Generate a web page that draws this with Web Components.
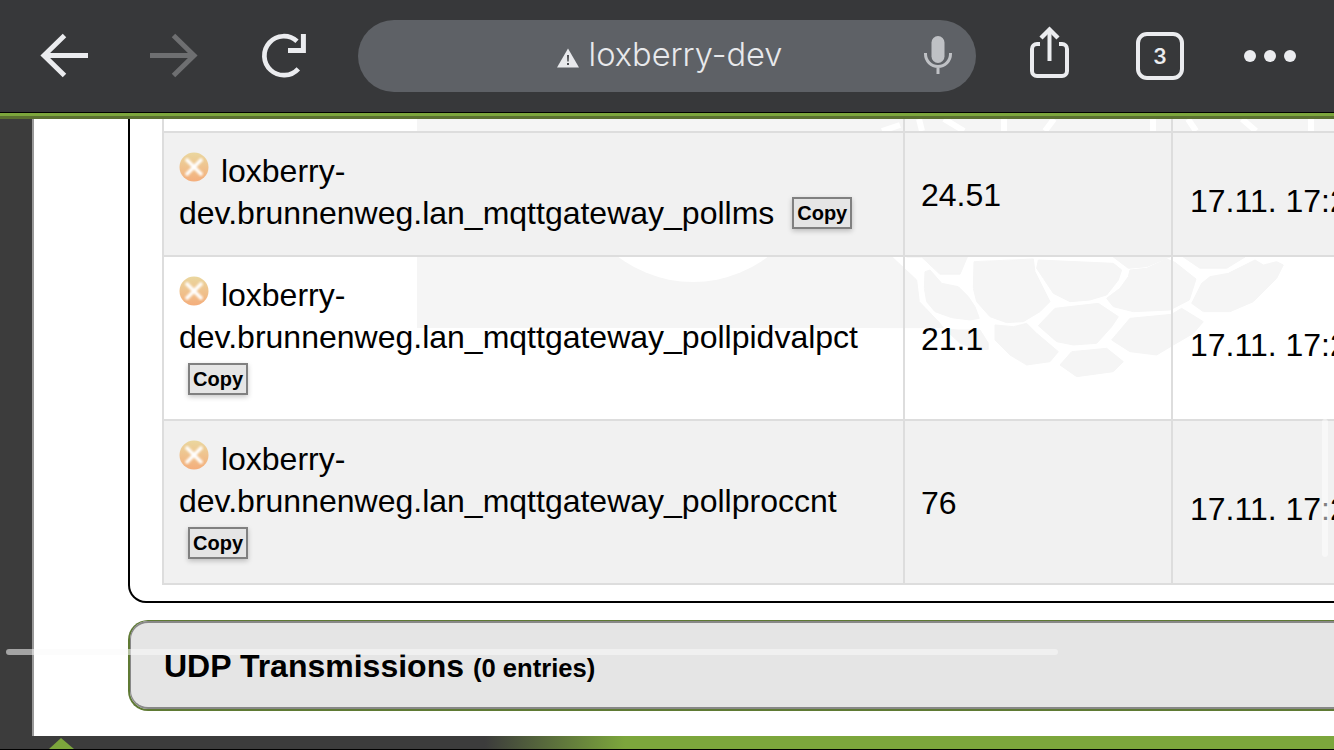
<!DOCTYPE html>
<html>
<head>
<meta charset="utf-8">
<style>
  html, body { margin: 0; height: 100%; overflow: hidden; background: #3c3c3c; }
  body { font-family: "Liberation Sans", Arial, sans-serif; }
</style>
</head>
<body>

<app-shell>
  <browser-bar slot="top" url="loxberry-dev" tabs="3"></browser-bar>

  <plugin-panel>
    <data-row kind="strip"></data-row>
    <data-row kind="odd" value="24.51" time="17.11. 17:2">
      <status-icon></status-icon> loxberry-dev.brunnenweg.lan_mqttgateway_pollms <copy-button>Copy</copy-button>
    </data-row>
    <data-row kind="even" value="21.1" time="17.11. 17:2">
      <status-icon></status-icon> loxberry-dev.brunnenweg.lan_mqttgateway_pollpidvalpct <copy-button>Copy</copy-button>
    </data-row>
    <data-row kind="odd last" value="76" time="17.11. 17:2">
      <status-icon></status-icon> loxberry-dev.brunnenweg.lan_mqttgateway_pollproccnt <copy-button>Copy</copy-button>
    </data-row>
  </plugin-panel>

  <collapsed-panel>UDP Transmissions <small slot="note">(0 entries)</small></collapsed-panel>

  <page-footer slot="bottom"></page-footer>
</app-shell>

<script>
  // toolbar of the mobile browser
  class BrowserBar extends HTMLElement {
    connectedCallback() {
      let url = this.getAttribute('url');
      let tabs = this.getAttribute('tabs');
      this.attachShadow({mode: 'open'});
      this.shadowRoot.innerHTML = `
        <style>
          :host { display: block; background: #37383a; }
          .bar { height: 112px; display: flex; align-items: center; padding-left: 40px; box-sizing: border-box; }
          svg { flex: none; display: block; }
          .forward, .reload { margin-left: 62px; }
          .share { margin-left: 50px; margin-top: -4px; }
          .tabs { margin-left: 62px; }
          .more { margin-left: 60px; }
          .url {
            flex: none; box-sizing: border-box; width: 618px; height: 72px; margin-left: 50px;
            border-radius: 36px; background: #5e6166; color: #e8e9ec;
            display: flex; align-items: center; justify-content: center; position: relative;
            font: 300 32.600px Inter, sans-serif; padding: 0 0 4px 5px;
          }
          .url .warn { margin-right: 10px; margin-top: 7px; }
          .url .mic { position: absolute; right: 23px; top: 15px; }
          .tabs {
            flex: none; box-sizing: border-box; width: 48px; height: 48px;
            border: 4px solid #ebecef; border-radius: 11px; color: #ebecef;
            display: flex; align-items: center; justify-content: center;
            font: 600 21px Inter, sans-serif;
          }
          .line { height: 1px; background: #000; }
          .green { height: 3px; background: #7ca63c; }
          .dark { height: 3px; background: #5a7030; }
        </style>
        <div class="bar">
          <svg width="48" height="48" viewBox="0 0 48 48" fill="none" stroke="#ebecef" stroke-width="5">
            <path d="M48 23.500H4M24.500 3.500 4 23.500l20.500 20"/>
          </svg>
          <svg class="forward" width="48" height="48" viewBox="0 0 48 48" fill="none" stroke="#6e6f71" stroke-width="5">
            <path d="M0 23.500h44M23.500 3.500 44 23.500l-20.500 20"/>
          </svg>
          <svg class="reload" width="48" height="48" viewBox="0 0 48 48" fill="none" stroke="#ebecef" stroke-width="4.700">
            <path d="M37 9.300A19.500 19.500 0 1 0 38.300 36.800"/>
            <path d="M28 18.500H43.400V2" stroke-width="5"/>
          </svg>
          <div class="url">
            <svg class="warn" width="22" height="20" viewBox="0 0 22 20">
              <path d="M11 0.500 22 19.500H0z" fill="#e8e9ec"/>
              <path d="M10 7h2l-.3 6.500h-1.400zM10 15h2v2h-2z" fill="#4a4c50"/>
            </svg>
            ${url}
            <svg class="mic" width="30" height="40" viewBox="0 0 30 40" fill="none">
              <rect x="8.500" y="1" width="13" height="27" rx="6.500" fill="#bfc1c5"/>
              <path d="M2.500 18v1a12.500 12.500 0 0 0 25 0v-1M15 32v7" stroke="#bfc1c5" stroke-width="3"/>
            </svg>
          </div>
          <svg class="share" width="48" height="56" viewBox="0 0 48 56" fill="none" stroke="#ebecef" stroke-width="4">
            <path d="M14 18H11a5 5 0 0 0-5 5v22a5 5 0 0 0 5 5h25a5 5 0 0 0 5-5V23a5 5 0 0 0-5-5h-3"/>
            <path d="M23.500 35V3"/>
            <path d="M15 12 23.500 3.500 32 12" stroke-width="4.400"/>
          </svg>
          <div class="tabs">${tabs}</div>
          <svg class="more" width="52" height="12" viewBox="0 0 52 12" fill="#ebecef">
            <circle cx="6" cy="6" r="6"/><circle cx="26" cy="6" r="6"/><circle cx="46" cy="6" r="6"/>
          </svg>
        </div>
        <div class="line"></div><div class="green"></div><div class="dark"></div>`;
    }
  }
  customElements.define('browser-bar', BrowserBar);

  // whole screen: toolbar, left gutter, scrolled page, footer, overlay scrollbars
  class AppShell extends HTMLElement {
    connectedCallback() {
      this.attachShadow({mode: 'open'});
      this.shadowRoot.innerHTML = `
        <style>
          :host { display: flex; flex-direction: column; height: 750px; width: 1334px; overflow: hidden; position: relative; }
          .middle { flex: 1; min-height: 0; display: flex; }
          .gutter { flex: none; width: 32px; background: #3c3c3c; }
          .page {
            flex: 1; min-width: 0; background: #fff; border-left: 2px solid #999;
            position: relative; overflow: hidden;
          }
          .flow { position: relative; padding-left: 94px; width: 1500px; }
          .mark { position: absolute; left: -34px; top: 0; }
          .hbar { position: absolute; left: 6px; top: 649px; width: 1052px; height: 6px; border-radius: 3px; background: rgba(250,250,250,.55); }
          .vbar { position: absolute; left: 1322px; top: 419px; width: 6px; height: 138px; border-radius: 3px; background: rgba(255,255,255,.5); }
        </style>
        <slot name="top"></slot>
        <div class="middle">
          <div class="gutter"></div>
          <div class="page">
            <svg class="mark" width="1334" height="617" viewBox="0 119 1334 617">
              <path fill="#f5f5f5" d="M417 255H880V328H417z"/>
              <circle cx="693" cy="158.500" r="123.500" fill="#fff"/>
              <path fill="#f5f5f5" d="M417 119H1334V131H417z"/>
              <g stroke="#fff" stroke-width="6" fill="none">
                <path d="M882 131 900 125M922 131 919 119M944 119 964 131M1004 119V131M1054 119 1045 131M1153 119V131M1188 119 1196 131M1242 119 1256 131M1311 119V131"/>
              </g>
              <!-- raspberry lobes, drawn in 3x coordinates of their corner -->
              <g transform="translate(880 255) scale(.33333)" fill="#f5f5f5" stroke="#f5f5f5" stroke-width="3" stroke-linejoin="round">
                <path d="M0 0 30 0 110 75 118 140 180 205 190 218 0 218z"/>
                <path d="M80 6 125 6 180 58 240 58 262 6z"/>
                <path d="M135 50 150 45 185 85 235 95 265 125 285 155 298 190 270 195 215 188 165 170 140 140 133 100z"/>
                <path d="M195 222 235 225 300 225 325 265 325 283 295 285 240 265z"/>
                <path d="M282 20 460 12 465 50 500 120 510 140 480 170 430 200 380 203 330 185 290 140 280 100z"/>
                <path d="M475 15 700 25 725 45 715 75 680 120 630 135 570 140 520 115 490 70 470 40z"/>
                <path d="M700 6 870 6 800 35 745 40z"/>
                <path d="M750 45 800 40 860 12 885 22 948 72 928 135 870 165 760 170 700 155 680 130 720 100 745 65z"/>
                <path d="M525 160 655 145 715 185 695 215 650 265 580 270 530 260 475 212z"/>
                <path d="M750 190 875 178 905 160 970 200 940 235 880 270 830 300 750 290 695 255z"/>
                <path d="M345 210 400 215 440 205 470 235 535 290 510 320 440 330 390 300 345 255z"/>
                <path d="M575 290 680 280 730 320 700 350 590 365 540 330z"/>
                <path d="M910 6 1095 6 1040 40 960 40z"/>
                <path d="M990 65 1045 55 1125 15 1150 30 1190 20 1210 30 1190 70 1120 140 1050 170 970 170 935 145 965 85z"/>
              </g>
            </svg>
            <div class="flow"><slot></slot></div>
          </div>
        </div>
        <slot name="bottom"></slot>
        <div class="hbar"></div>
        <div class="vbar"></div>`;
    }
  }
  customElements.define('app-shell', AppShell);

  // bordered box around the table, its top is scrolled away
  class PluginPanel extends HTMLElement {
    connectedCallback() {
      this.attachShadow({mode: 'open'});
      this.shadowRoot.innerHTML = `
        <style>
          :host {
            display: block; box-sizing: border-box; width: 1360px;
            border: 2px solid #000; border-top: 0; border-radius: 0 0 0 18px;
            padding: 0 0 16px 32px;
          }
        </style>
        <slot></slot>`;
    }
  }
  customElements.define('plugin-panel', PluginPanel);

  class DataRow extends HTMLElement {
    connectedCallback() {
      let kind = this.getAttribute('kind') || '';
      let value = this.getAttribute('value') || '';
      let time = this.getAttribute('time') || '';
      this.attachShadow({mode: 'open'});
      this.shadowRoot.innerHTML = `
        <style>
          :host { display: grid; grid-template-columns: 741px 268px 1fr; font-size: 32px; line-height: 42px; color: #000; }
          :host(:not([kind="strip"])) { min-height: 124px; }
          :host([kind="strip"]) { height: 12px; }
          :host([kind~="odd"]) { background: #f1f1f1; }
          .cell { box-sizing: border-box; border-left: 2px solid #ddd; }
          :host(:not([kind="strip"])) .cell { border-top: 2px solid #ddd; }
          :host([kind~="last"]) .cell { border-bottom: 2px solid #ddd; }
          .name { padding: 17px 16px 19px 15px; }
          .value, .time { display: flex; align-items: center; padding-left: 16px; white-space: nowrap; }
          .value { padding-top: 2px; }
          .time { padding-left: 17px; padding-top: 14px; }
        </style>
        <div class="cell name"><slot></slot></div>
        <div class="cell value">${value}</div>
        <div class="cell time">${time}</div>`;
    }
  }
  customElements.define('data-row', DataRow);

  class StatusIcon extends HTMLElement {
    connectedCallback() {
      this.attachShadow({mode: 'open'});
      this.shadowRoot.innerHTML = `
        <style>
          :host { display: inline-block; width: 30px; height: 30px; margin-right: 3px; vertical-align: 0; }
          svg { display: block; }
        </style>
        <svg width="30" height="30" viewBox="0 0 30 30">
          <defs>
            <linearGradient id="g" x1="0" y1="0" x2="0" y2="1">
              <stop offset="0" stop-color="#ead79f"/>
              <stop offset="1" stop-color="#f4ae7c"/>
            </linearGradient>
            <filter id="b"><feGaussianBlur stdDeviation="1"/></filter>
            <filter id="s"><feGaussianBlur stdDeviation=".4"/></filter>
          </defs>
          <circle cx="15" cy="15" r="14.500" fill="url(#g)" filter="url(#s)"/>
          <path d="M7 7 23 23M23 7 7 23" stroke="#fff" stroke-width="3.500" filter="url(#b)"/>
        </svg>`;
    }
  }
  customElements.define('status-icon', StatusIcon);

  class CopyButton extends HTMLElement {
    connectedCallback() {
      this.attachShadow({mode: 'open'});
      this.shadowRoot.innerHTML = `
        <style>
          :host {
            display: inline-block; box-sizing: border-box; height: 32px; width: 60px; margin: 0 9px;
            border: 2px solid #808080; background: #e5e5e5; box-shadow: 0 2px 5px rgba(0,0,0,.22);
            font: bold 20px/28px "Liberation Sans", Arial, sans-serif; text-align: center; vertical-align: 4px;
          }
        </style>
        <slot></slot>`;
    }
  }
  customElements.define('copy-button', CopyButton);

  class CollapsedPanel extends HTMLElement {
    connectedCallback() {
      this.attachShadow({mode: 'open'});
      this.shadowRoot.innerHTML = `
        <style>
          :host {
            display: block; box-sizing: border-box; width: 1360px; height: 91px; margin-top: 17px;
            border: solid #5f7a34; border-width: 1px 0 2px 2px; border-radius: 20px 0 0 20px;
          }
          .in {
            box-sizing: border-box; height: 100%; display: flex; align-items: baseline; gap: 9px;
            border: solid #888; border-width: 2px 0 2px 1px; border-radius: 18px 0 0 18px;
            background: #e5e5e5; padding: 25px 0 0 33px;
            font: bold 32px/36px "Liberation Sans", Arial, sans-serif; color: #000;
          }
          ::slotted(small) { font-size: 25.600px; }
        </style>
        <div class="in"><span><slot></slot></span><slot name="note"></slot></div>`;
    }
  }
  customElements.define('collapsed-panel', CollapsedPanel);

  class PageFooter extends HTMLElement {
    connectedCallback() {
      this.attachShadow({mode: 'open'});
      this.shadowRoot.innerHTML = `
        <style>
          :host { display: block; height: 14px; position: relative; border-bottom: 1px solid #000; box-sizing: border-box;
            background: linear-gradient(90deg, #3c3c3c 485px, #7ca63c 625px); }
          .tip { position: absolute; left: 49px; top: 2px; width: 0; height: 0;
            border-left: 12px solid transparent; border-right: 13px solid transparent; border-bottom: 11px solid #7ca63c; }
        </style>
        <div class="tip"></div>`;
    }
  }
  customElements.define('page-footer', PageFooter);
</script>
</body>
</html>
